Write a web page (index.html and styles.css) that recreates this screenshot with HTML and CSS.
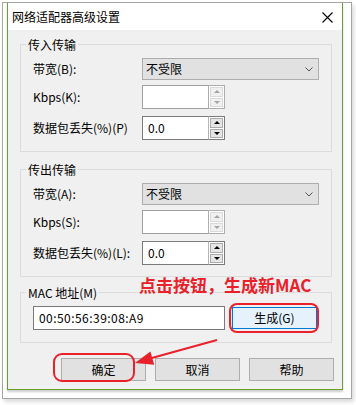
FILE: index.html
```html
<!DOCTYPE html>
<html>
<head>
<meta charset="utf-8">
<title>网络适配器高级设置</title>
<link rel="stylesheet" href="styles.css">
</head>
<body>
<div class="frame">
  <div class="window">
    <div class="titlebar">
      <span class="title">网络适配器高级设置</span>
      <svg class="close" width="11" height="11" viewBox="0 0 11 11"><path d="M0.5 0.5L10.5 10.5M10.5 0.5L0.5 10.5" stroke="#000" stroke-width="1.1"/></svg>
    </div>
    <div class="client">
      <fieldset class="group">
        <legend>传入传输</legend>
        <div class="row sel">
          <label>带宽(B):</label>
          <div class="select"><span>不受限</span><svg width="8" height="5" viewBox="0 0 8 5"><path d="M0.5 0.5L4 4L7.5 0.5" fill="none" stroke="#555" stroke-width="1"/></svg></div>
        </div>
        <div class="row">
          <label>Kbps(K):</label>
          <div class="spin off"><div class="box"></div><div class="updown"><span class="btn"><i class="up"></i></span><span class="btn"><i class="down"></i></span></div></div>
        </div>
        <div class="row last">
          <label>数据包丢失(%)(P)</label>
          <div class="spin"><div class="box">0.0</div><div class="updown"><span class="btn"><i class="up"></i></span><span class="btn"><i class="down"></i></span></div></div>
        </div>
      </fieldset>

      <fieldset class="group second">
        <legend>传出传输</legend>
        <div class="row sel">
          <label>带宽(A):</label>
          <div class="select"><span>不受限</span><svg width="8" height="5" viewBox="0 0 8 5"><path d="M0.5 0.5L4 4L7.5 0.5" fill="none" stroke="#555" stroke-width="1"/></svg></div>
        </div>
        <div class="row">
          <label>Kbps(S):</label>
          <div class="spin off"><div class="box"></div><div class="updown"><span class="btn"><i class="up"></i></span><span class="btn"><i class="down"></i></span></div></div>
        </div>
        <div class="row last">
          <label>数据包丢失(%)(L):</label>
          <div class="spin"><div class="box">0.0</div><div class="updown"><span class="btn"><i class="up"></i></span><span class="btn"><i class="down"></i></span></div></div>
        </div>
      </fieldset>

      <fieldset class="group mac">
        <legend>MAC 地址(M)</legend>
        <div class="macrow">
          <div class="macbox">00:50:56:39:08:A9</div>
          <div class="button focus">生成(G)</div>
        </div>
      </fieldset>

      <div class="actions">
        <div class="button">确定</div>
        <div class="button">取消</div>
        <div class="button">帮助</div>
      </div>
    </div>
  </div>
</div>

<div class="note">点击按钮，生成新MAC</div>
<svg class="marks" width="356" height="405" viewBox="0 0 356 405">
  <rect x="230" y="304" width="88" height="28" rx="7" fill="none" stroke="#e8212b" stroke-width="2"/>
  <rect x="54" y="354" width="80" height="27" rx="8" fill="none" stroke="#e8212b" stroke-width="2"/>
  <line x1="217" y1="340" x2="150" y2="358.5" stroke="#e8212b" stroke-width="2"/>
  <polygon points="135,363 150.4,351.4 154.2,364.8" fill="#e8212b"/>
</svg>
</body>
</html>
```

FILE: styles.css
```css
html, body{
  margin:0;
  padding:0;
}
body{
  position:relative;
  width:356px;
  height:405px;
  background:#fff;
  color:#000;
  font-family:"Noto Sans CJK SC", sans-serif;
  font-size:12px;
  line-height:16px;
}
.frame{
  box-sizing:border-box;
  width:350px;
  height:397px;
  margin:2px 0 0 2px;
  padding:0 0 0 4px;
  border:1px solid #a6a6a6;
  background:#fff;
  box-shadow:2px 3px 4px rgba(0,0,0,0.15);
}
.window{
  box-sizing:border-box;
  width:336px;
  height:387px;
  border:1px solid #68a12b;
  border-top:none;
  display:flex;
  flex-direction:column;
  box-shadow:0 2px 2px rgba(0,0,0,0.2);
}
.titlebar{
  height:27px;
  flex:none;
  background:#fff;
  display:flex;
  align-items:center;
  justify-content:space-between;
  padding:0 9px 0 4px;
}
.close{
  margin-top:1px;
}
.client{
  flex:1;
  background:#f0f0f0;
  padding:6px 10px 0 12px;
}

/* group boxes */
.group{
  margin:0;
  min-width:0;
  padding:5px 12px 11px 12px;
  border:1px solid #dcdcdc;
}
.group legend{
  padding:0 2px;
  margin-left:-7px;
  line-height:17px;
}
.second{
  margin-top:9px;
}
.mac{
  margin-top:7px;
  padding-bottom:12px;
}

.row{
  display:flex;
  align-items:center;
  height:24px;
  margin-bottom:7px;
}
.row.sel{
  height:22px;
  margin-bottom:5px;
}
.row.last{
  margin-bottom:0;
}
.row label{
  width:109px;
  flex:none;
  white-space:nowrap;
}

.select{
  box-sizing:border-box;
  width:177px;
  height:22px;
  border:1px solid #adadad;
  background:#e1e1e1;
  display:flex;
  align-items:center;
  justify-content:space-between;
  padding:0 5px 0 3px;
}

.spin{
  display:flex;
  height:24px;
}
.spin .box{
  box-sizing:border-box;
  width:66px;
  height:24px;
  border:1px solid #7a7a7a;
  border-right:none;
  background:#fff;
  padding:3px 0 0 5px;
}
.updown{
  box-sizing:border-box;
  width:17px;
  height:24px;
  border:1px solid #7a7a7a;
  border-left:1px solid #b5b5b5;
  background:#fff;
  padding:1px;
  display:flex;
  flex-direction:column;
  gap:1px;
}
.updown .btn{
  flex:1;
  border:1px solid #acacac;
  background:#e5e5e5;
  display:flex;
  align-items:center;
  justify-content:center;
}
.updown i{
  width:0;
  height:0;
  border-left:3px solid transparent;
  border-right:3px solid transparent;
}
.updown i.up{
  border-bottom:3px solid #000;
}
.updown i.down{
  border-top:3px solid #000;
}
.spin.off .updown{
  border-color:#adadad;
}
.spin.off .box{
  border-color:#a0a0a0;
}
.spin.off .btn{
  border-color:#dadada;
  background:#f0f0f0;
}
.spin.off i.up{
  border-bottom-color:#a3a3a3;
}
.spin.off i.down{
  border-top-color:#a3a3a3;
}

.macrow{
  display:flex;
  align-items:center;
  height:24px;
}
.macbox{
  box-sizing:border-box;
  width:192px;
  height:24px;
  border:1px solid #7a7a7a;
  background:#fff;
  padding:3px 0 0 5px;
  letter-spacing:0.45px;
}

.button{
  box-sizing:border-box;
  width:85px;
  height:23px;
  border:1px solid #adadad;
  background:#e1e1e1;
  display:flex;
  align-items:center;
  justify-content:center;
}
.macrow .button{
  height:22px;
  margin-left:7px;
}
.button.focus{
  border-color:#0078d7;
  background:#e5f1fb;
}
.actions{
  margin-top:15px;
  display:flex;
  justify-content:flex-end;
  gap:9px;
  margin-right:-2px;
}

/* red annotations */
.note{
  position:absolute;
  left:139px;
  top:276px;
  font-size:17px;
  line-height:17px;
  font-weight:bold;
  color:#e8212b;
  white-space:nowrap;
}
.marks{
  position:absolute;
  left:0;
  top:0;
  pointer-events:none;
}
```
